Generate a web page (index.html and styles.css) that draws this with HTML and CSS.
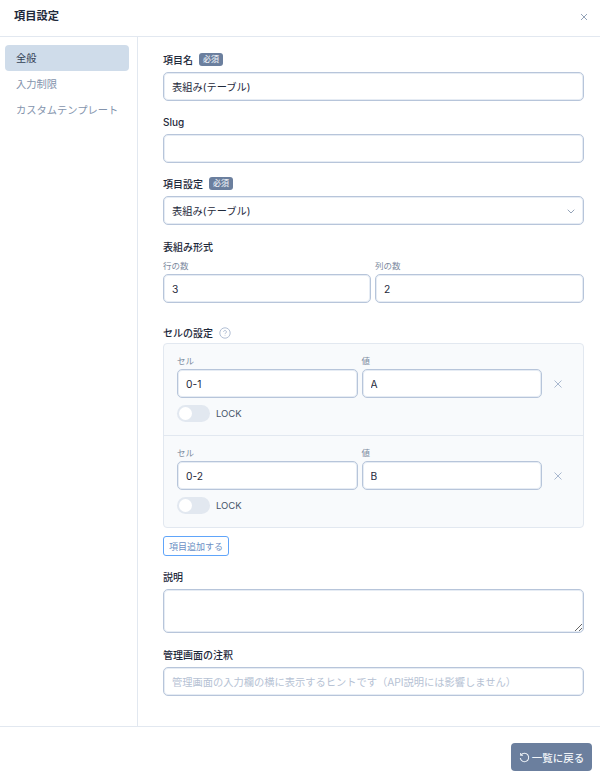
FILE: index.html
```html
<!DOCTYPE html>
<html lang="ja">
  <head>
    <meta charset="UTF-8" />
    <meta name="viewport" content="width=device-width, initial-scale=1.0" />
    <title>項目設定</title>
    <link rel="stylesheet" href="styles.css">
  </head>
  <body>
    <div class="modal">
      <header class="modal-header">
        <h1>項目設定</h1>
        <svg class="close-icon" width="8" height="8" viewBox="0 0 8 8"><path d="M1 1l6 6M7 1L1 7" /></svg>
      </header>

      <div class="modal-body">
        <nav class="side-nav">
          <a class="side-link active">全般</a>
          <a class="side-link">入力制限</a>
          <a class="side-link">カスタムテンプレート</a>
        </nav>

        <main class="form">
          <div class="field field-name">
            <label class="label">項目名 <span class="badge">必須</span></label>
            <input class="input" type="text" value="表組み(テーブル)" />
          </div>
          <div class="field field-slug">
            <label class="label">Slug</label>
            <input class="input" type="text" />
          </div>
          <div class="field field-type">
            <label class="label">項目設定 <span class="badge">必須</span></label>
            <div class="select-wrap">
              <select class="input select">
                <option>表組み(テーブル)</option>
              </select>
              <svg class="chevron" width="8" height="5" viewBox="0 0 8 5"><path d="M.7.7L4 4 7.3.7" /></svg>
            </div>
          </div>
          <div class="field field-format">
            <label class="label">表組み形式</label>
            <div class="two-col">
              <div>
                <label class="sub-label">行の数</label>
                <input class="input" type="text" value="3" />
              </div>
              <div>
                <label class="sub-label">列の数</label>
                <input class="input" type="text" value="2" />
              </div>
            </div>
          </div>

          <div class="field field-cells">
            <label class="label label-flush">セルの設定
              <svg class="help-icon" width="12" height="12" viewBox="0 0 12 12">
                <circle cx="6" cy="6" r="5.2" />
                <path d="M4.6 4.8a1.4 1.4 0 1 1 2.2 1.2c-.5.3-.8.6-.8 1.1" />
                <path d="M6 8.4v.5" />
              </svg>
            </label>
            <div class="cell-box">
              <div class="cell-row">
                <div class="cell-inputs">
                  <div class="cell-col">
                    <label class="sub-label">セル</label>
                    <input class="input" type="text" value="0-1" />
                  </div>
                  <div class="cell-col">
                    <label class="sub-label">値</label>
                    <input class="input" type="text" value="A" />
                  </div>
                  <svg class="remove-icon" width="8" height="8" viewBox="0 0 8 8"><path d="M.5.5l7 7M7.5.5l-7 7" /></svg>
                </div>
                <div class="lock"><span class="toggle"><span class="knob"></span></span>LOCK</div>
              </div>
              <div class="cell-row">
                <div class="cell-inputs">
                  <div class="cell-col">
                    <label class="sub-label">セル</label>
                    <input class="input" type="text" value="0-2" />
                  </div>
                  <div class="cell-col">
                    <label class="sub-label">値</label>
                    <input class="input" type="text" value="B" />
                  </div>
                  <svg class="remove-icon" width="8" height="8" viewBox="0 0 8 8"><path d="M.5.5l7 7M7.5.5l-7 7" /></svg>
                </div>
                <div class="lock"><span class="toggle"><span class="knob"></span></span>LOCK</div>
              </div>
            </div>
            <button class="add-btn" type="button">項目追加する</button>
          </div>

          <div class="field field-desc">
            <label class="label">説明</label>
            <textarea class="input textarea"></textarea>
          </div>
          <div class="field field-note">
            <label class="label">管理画面の注釈</label>
            <input class="input" type="text" placeholder="管理画面の入力欄の横に表示するヒントです（API説明には影響しません）" />
          </div>
        </main>
      </div>

      <footer class="modal-footer">
        <button class="back-btn" type="button">
          <svg width="11" height="11" viewBox="0 0 12 12"><path d="M2.3 3.2A4.6 4.6 0 1 1 1.4 6.6" /><path d="M1.8 1v2.6h2.6" /></svg>
          一覧に戻る
        </button>
      </footer>
    </div>
  </body>
</html>
```

FILE: styles.css
```css
* {
  box-sizing: border-box;
}
body {
  margin: 0;
  background-color: #fff;
  color: #1e293b;
  font-family: Inter, "Noto Sans CJK JP", sans-serif;
  font-size: 10px;
}
.modal {
  display: flex;
  flex-direction: column;
  height: 100vh;
}
.modal-header {
  display: flex;
  justify-content: space-between;
  align-items: center;
  height: 37px;
  padding: 0 12px 6px 14px;
  border-bottom: 1px solid #e2e8f0;
}
.modal-header h1 {
  margin: 0;
  font-size: 11.25px;
  font-weight: 700;
  color: #1e293b;
}
.close-icon {
  margin-top: 4px;
}
.close-icon path {
  fill: none;
  stroke: #94a3b8;
  stroke-width: 1;
}
.modal-body {
  display: flex;
  height: 690px;
  border-bottom: 1px solid #e2e8f0;
}
.side-nav {
  width: 138px;
  flex-shrink: 0;
  padding: 8px 8px 0 5px;
  border-right: 1px solid #e2e8f0;
  display: flex;
  flex-direction: column;
}
.side-link {
  height: 26px;
  line-height: 26px;
  padding-left: 11px;
  color: #8494ad;
  font-size: 10.25px;
  border-radius: 4px;
}
.side-link.active {
  background-color: #cfdcea;
  color: #334155;
}
.form {
  flex: 1;
  padding: 15px 16px 0 25px;
  min-width: 0;
}
.field {
  display: block;
}
.field-slug,
.field-type {
  margin-top: 13px;
}
.field-format {
  margin-top: 14px;
}
.field-cells {
  margin-top: 20px;
}
.field-desc {
  margin-top: 13px;
}
.field-note {
  margin-top: 14px;
}
.label {
  display: flex;
  align-items: center;
  gap: 5px;
  height: 20px;
  padding-bottom: 5px;
  font-size: 10px;
  font-weight: 500;
  color: #1e293b;
}
.label-flush {
  padding-bottom: 1px;
}
.badge {
  display: inline-block;
  height: 13px;
  line-height: 13px;
  padding: 0 4px;
  margin-left: 1px;
  border-radius: 3px;
  background-color: #6b7f9e;
  color: #e8edf4;
  font-size: 8px;
}
.input {
  display: block;
  width: 100%;
  height: 29px;
  padding: 0 8px;
  background-color: #fff;
  border: 1px solid #b7c5da;
  box-shadow: inset 0 0 0 1px rgba(200, 212, 230, 0.45);
  border-radius: 5px;
  color: #1e293b;
  font-family: inherit;
  font-size: 10.25px;
  outline: none;
}
.input::placeholder {
  color: #b6c2d4;
}
.select-wrap {
  position: relative;
}
.select {
  appearance: none;
}
.chevron {
  position: absolute;
  right: 9px;
  top: 13px;
}
.chevron path {
  fill: none;
  stroke: #94a3b8;
  stroke-width: 1;
}
.two-col {
  display: grid;
  grid-template-columns: 208px 1fr;
  gap: 4px;
}
.sub-label {
  display: block;
  height: 15px;
  line-height: 15px;
  color: #7c8a9e;
  font-size: 8.5px;
}
.help-icon {
  margin-left: 1px;
}
.help-icon circle,
.help-icon path {
  fill: none;
  stroke: #a9b8cf;
  stroke-width: 0.9;
}
.cell-box {
  background-color: #f8fafc;
  border: 1px solid #e2e8f0;
  border-radius: 4px;
}
.cell-row {
  height: 92px;
  padding: 10px 13px 0;
  border-bottom: 1px solid #e2e8f0;
}
.cell-row:last-child {
  height: 91px;
  border-bottom: none;
}
.cell-inputs {
  display: flex;
  align-items: flex-end;
  gap: 4px;
}
.cell-col {
  width: 180.5px;
}
.remove-icon {
  margin: 0 0 10px 8px;
  flex-shrink: 0;
}
.remove-icon path {
  fill: none;
  stroke: #a9b8cf;
  stroke-width: 1;
}
.lock {
  display: flex;
  align-items: center;
  gap: 6px;
  margin-top: 7px;
  font-size: 9.5px;
  color: #475569;
}
.toggle {
  display: block;
  width: 33px;
  height: 17px;
  padding: 2px;
  background-color: #e2e8f0;
  border-radius: 9px;
}
.knob {
  display: block;
  width: 13px;
  height: 13px;
  background-color: #fff;
  border-radius: 50%;
}
.add-btn {
  display: block;
  width: 66px;
  height: 20px;
  margin-top: 8px;
  padding: 0;
  background-color: #fff;
  border: 1px solid #60a5fa;
  border-radius: 3px;
  color: #6b8fc4;
  font-family: inherit;
  font-size: 9px;
}
.textarea {
  height: 44px;
  padding-top: 6px;
  resize: vertical;
}
.modal-footer {
  flex: 1;
  display: flex;
  justify-content: flex-end;
  padding: 16px 8px 0 0;
}
.back-btn {
  display: flex;
  align-items: center;
  justify-content: center;
  gap: 2px;
  width: 81px;
  height: 28px;
  padding: 0;
  background-color: #6b7f9e;
  border: none;
  border-radius: 4px;
  color: #f1f5f9;
  font-family: inherit;
  font-size: 10.5px;
  font-weight: 500;
}
.back-btn path {
  fill: none;
  stroke: #f1f5f9;
  stroke-width: 1.1;
}
```
